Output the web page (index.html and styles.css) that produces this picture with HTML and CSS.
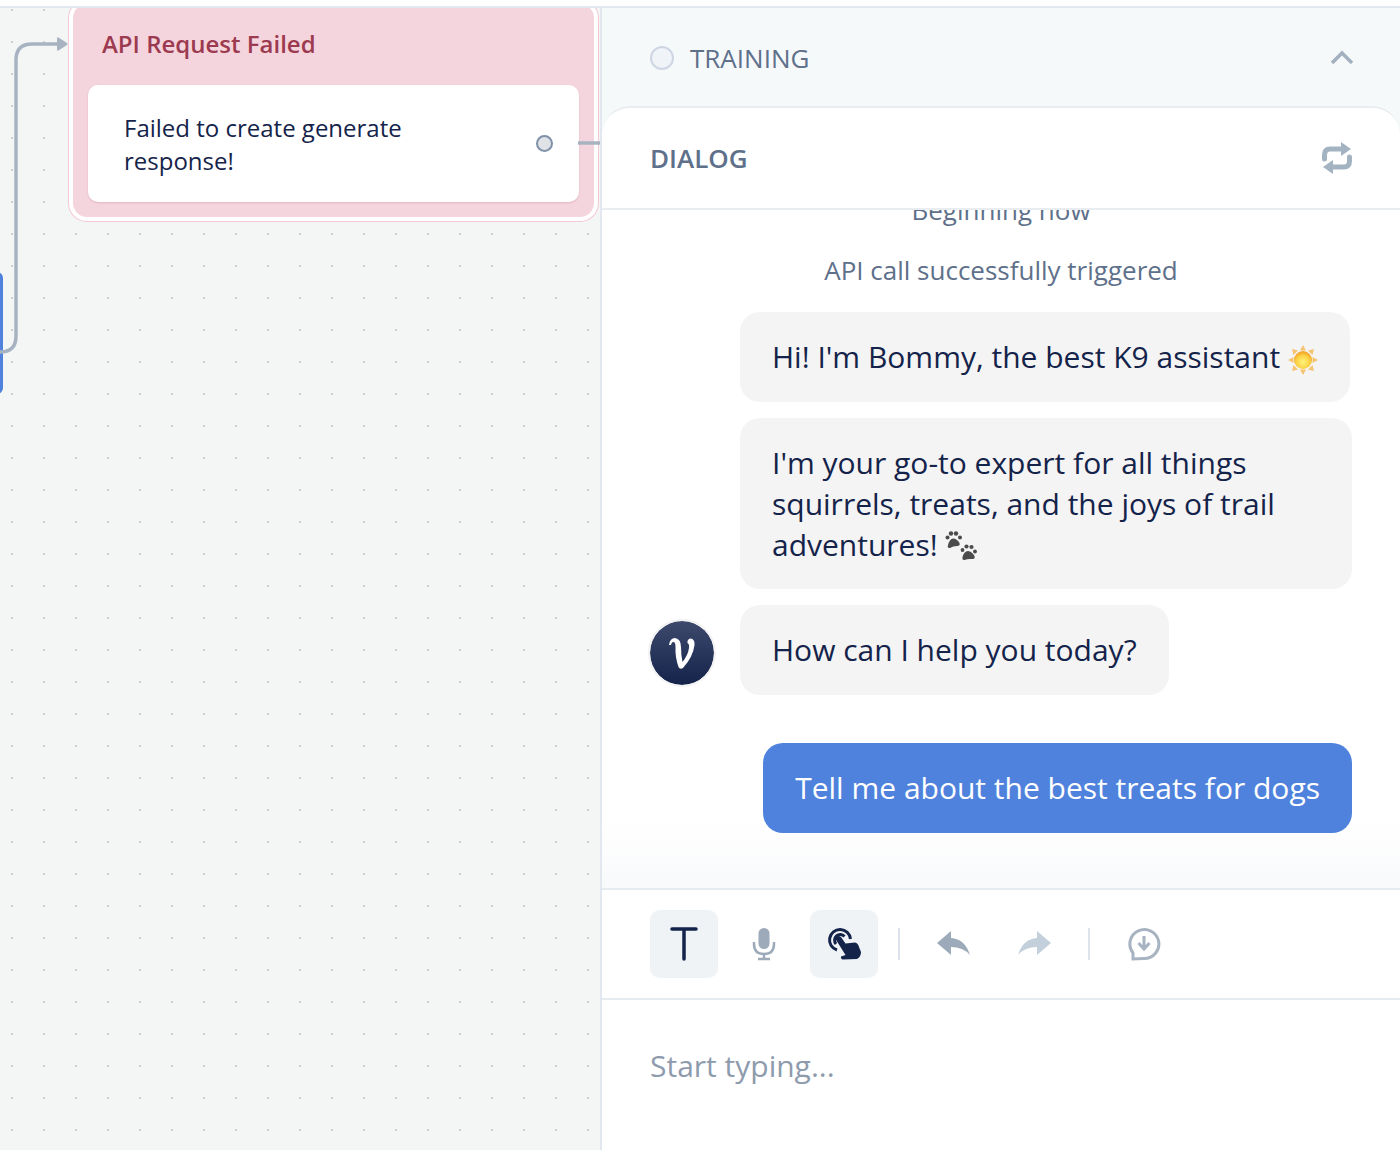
FILE: index.html
```html
<!DOCTYPE html>
<html lang="en">
<head>
    <meta charset="UTF-8">
    <meta name="viewport" content="width=device-width, initial-scale=1.0">
    <title>Dialog</title>
    <link rel="stylesheet" href="styles.css">
</head>
<body>
    <div class="top-strip"></div>
    <div class="main">
        <div class="canvas">
            <div class="blue-node"></div>
            <div class="error-node">
                <div class="error-title">API Request Failed</div>
                <div class="error-card">
                    <div class="error-text">Failed to create generate response!</div>
                    <span class="port"></span>
                </div>
            </div>
            <svg class="wires" width="600" height="400" viewBox="0 0 600 400">
                <path class="wire" d="M0 344 Q16 344 16 328 V52 Q16 36 32 36 H60"/>
                <path class="wire-head" d="M57 30 Q57 29 58.500 29.500 L67 35 Q68 36 67 37 L58.500 42.500 Q57 43 57 42 Z"/>
                <path class="wire" d="M578 135 H600"/>
            </svg>
        </div>

        <div class="panel">
            <div class="training">
                <div class="training-left">
                    <span class="radio"></span>
                    <span>TRAINING</span>
                </div>
                <svg width="24" height="16" viewBox="0 0 24 16"><path class="chevron" d="M2 13 L12 3 L22 13"/></svg>
            </div>

            <div class="dialog">
                <div class="dialog-head">
                    <span>DIALOG</span>
                    <svg width="32" height="34" viewBox="0 0 32 34">
                        <path class="repeat" d="M3.500 18 V14 Q3.500 8 9 8 H21"/>
                        <path class="repeat-fill" d="M20 1 L30 8 L20 15 Z"/>
                        <path class="repeat" d="M28.500 16 V20 Q28.500 26 23 26 H11"/>
                        <path class="repeat-fill" d="M12 19 L2 26 L12 33 Z"/>
                    </svg>
                </div>

                <div class="messages">
                    <div class="system">Beginning now</div>
                    <div class="system">API call successfully triggered</div>
                    <div class="bubble">Hi! I'm Bommy, the best K9 assistant
                        <svg class="emoji" width="30" height="30" viewBox="0 0 30 30">
                            <defs>
                                <radialGradient id="sunFill" cx="50%" cy="62%" r="58%">
                                    <stop offset="0" stop-color="#fff27a"/>
                                    <stop offset="0.6" stop-color="#fcd449"/>
                                    <stop offset="1" stop-color="#f2a62a"/>
                                </radialGradient>
                            </defs>
                            <path fill="#f5c473" d="M15 0 L18 5.500 H12 Z M15 30 L12 24.500 H18 Z M0 15 L5.500 12 V18 Z M30 15 L24.500 18 V12 Z M4 4 L10 5.500 L5.500 10 Z M26 4 L24.500 10 L20 5.500 Z M4 26 L5.500 20 L10 24.500 Z M26 26 L20 24.500 L24.500 20 Z"/>
                            <circle cx="15" cy="15" r="9" fill="url(#sunFill)"/>
                        </svg>
                    </div>
                    <div class="bubble bubble-wide">I'm your go-to expert for all things squirrels, treats, and the joys of trail adventures!
                        <svg class="emoji paws" width="32" height="30" viewBox="0 0 32 30" fill="#4b4b4b">
                            <path d="M8 7.500 Q12 7.500 14.500 12 Q15.500 15 12 15 Q8 15 5 17 Q2 17.500 3 14 Q4.500 8 8 7.500 Z"/>
                            <circle cx="2.500" cy="6.500" r="2"/><circle cx="6" cy="2.500" r="2.200"/><circle cx="11" cy="2.500" r="2.200"/><circle cx="15" cy="6.500" r="2"/>
                            <path d="M23 20 Q27 20.500 29.500 25 Q30.500 28.500 27 28 Q23 27.500 19.500 29 Q17 29.500 17.500 26 Q19 20.500 23 20 Z"/>
                            <circle cx="17.500" cy="19" r="1.900"/><circle cx="21.500" cy="15.500" r="2.100"/><circle cx="26.500" cy="16" r="2.100"/><circle cx="30" cy="20.500" r="1.900"/>
                        </svg>
                    </div>
                    <div class="bot-row">
                        <div class="avatar">
                            <svg width="28" height="34" viewBox="0 0 28 34"><path fill="white" d="M1 9 Q2 2 7 2 Q13 3 13 11 Q13 19 14.500 26 Q20 19 21 12 Q21.500 8 19.500 7 Q19 3 22.500 2.500 Q27 3 26.500 9 Q25 21 15 32 Q12 34 10.500 31 Q7 21 7.500 11 Q7.500 6 5.500 6 Q3.500 6 3 9 Z"/></svg>
                        </div>
                        <div class="bubble">How can I help you today?</div>
                    </div>
                    <div class="bubble bubble-user">Tell me about the best treats for dogs</div>
                </div>

                <div class="toolbar">
                    <div class="tool tool-on">
                        <svg width="30" height="36" viewBox="0 0 30 36"><path class="t-stroke" d="M3 3 H27 M15 3 V33"/></svg>
                    </div>
                    <div class="tool">
                        <svg width="24" height="34" viewBox="0 0 24 34">
                            <rect x="6.500" y="1" width="11" height="21" rx="5.500" fill="#9daab9"/>
                            <path class="mic-arc" d="M2 15 V17 Q2 27 12 27 Q22 27 22 17 V15 M12 27 V32 M6 32 H18"/>
                        </svg>
                    </div>
                    <div class="tool tool-on">
                        <svg width="36" height="36" viewBox="0 0 36 36">
                            <path class="touch-arc" d="M11 24 A10.500 10.500 0 1 1 24.500 13"/>
                            <path class="touch-arc" d="M10 18 A5.660 5.660 0 1 1 18.500 10.500"/>
                            <path fill="#14234a" d="M9.500 13 Q10 10 13 10 Q15 10 16 12.500 L19.500 17.500 L29 16.500 Q32 17 33 21 L35 26 Q35 31 31 33 L17 33.500 Q14.500 33 15 30.500 L19.500 29 Z"/>
                        </svg>
                    </div>
                    <span class="sep"></span>
                    <div class="tool">
                        <svg width="34" height="28" viewBox="0 0 34 28"><path fill="#9daab9" d="M0 13 L14 1 V8 Q28 9 33 25 Q26 17 14 17 V25 Z"/></svg>
                    </div>
                    <div class="tool">
                        <svg width="34" height="28" viewBox="0 0 34 28"><path fill="#c3d0dc" d="M34 13 L20 1 V8 Q6 9 1 25 Q8 17 20 17 V25 Z"/></svg>
                    </div>
                    <span class="sep"></span>
                    <div class="tool">
                        <svg width="34" height="34" viewBox="0 0 34 34">
                            <path class="dl-ring" d="M6 32 L6 26 A14.500 14.500 0 1 1 17 31.500 Z"/>
                            <path class="dl-arrow" d="M17 9 V21 M11.500 16 L17 22 L22.500 16"/>
                        </svg>
                    </div>
                </div>

                <div class="input-row">Start typing...</div>
            </div>
        </div>
    </div>
</body>
</html>
```

FILE: styles.css
```css
* {
    box-sizing: border-box;
}
body {
    font-family: "Open Sans", sans-serif;
    background-color: white;
    height: 1150px;
    margin: 0;
    overflow: hidden;
}
.top-strip {
    height: 8px;
    border-bottom: 2px solid #e3e7f0;
}
.main {
    display: flex;
    height: 1142px;
}

/* canvas */
.canvas {
    position: relative;
    width: 602px;
    flex-shrink: 0;
    overflow: hidden;
    background-color: #f4f6f6;
    background-image: radial-gradient(circle, #cdd3d5 1.3px, transparent 1.5px);
    background-size: 32px 32px;
    background-position: -4px -14px;
    border-right: 2px solid #e3e7f0;
}
.blue-node {
    position: absolute;
    left: -20px;
    top: 264px;
    width: 23px;
    height: 122px;
    background-color: #4f82dc;
    border-radius: 6px;
}
.wires {
    position: absolute;
    left: 0;
    top: 0;
}
.wire {
    fill: none;
    stroke: #a8b3c2;
    stroke-width: 3.5;
}
.wire-head {
    fill: #a8b3c2;
}
.error-node {
    position: absolute;
    left: 73px;
    top: -4px;
    width: 521px;
    padding: 23px 15px 15px 15px;
    background-color: #f5d5dd;
    border-radius: 14px;
    box-shadow: 0 0 0 4px white, 0 0 0 5px #f3c8d2;
}
.error-title {
    font-size: 24px;
    font-weight: 600;
    line-height: 34px;
    color: #9c3a50;
    padding-left: 14px;
    margin-bottom: 24px;
}
.error-card {
    display: flex;
    align-items: center;
    justify-content: space-between;
    height: 117px;
    padding: 0 26px 0 36px;
    background-color: white;
    border-radius: 10px;
    box-shadow: 0 1px 2px rgba(190, 110, 130, 0.3);
}
.error-text {
    width: 300px;
    font-size: 24px;
    line-height: 33px;
    color: #14234a;
}
.port {
    width: 17px;
    height: 17px;
    background-color: #dfe3e8;
    border: 2px solid #7f91a8;
    border-radius: 50%;
}

/* right panel */
.panel {
    flex: 1;
    min-width: 0;
    display: flex;
    flex-direction: column;
    background-color: #f6f9fa;
}
.training {
    height: 98px;
    flex-shrink: 0;
    display: flex;
    align-items: center;
    justify-content: space-between;
    padding: 2px 46px 0 48px;
    font-size: 26px;
    color: #5e708a;
}
.training-left {
    display: flex;
    align-items: center;
    gap: 16px;
}
.radio {
    width: 24px;
    height: 24px;
    background-color: #f0f3f8;
    border: 2px solid #ced6e4;
    border-radius: 50%;
}
.chevron {
    fill: none;
    stroke: #a3b0bf;
    stroke-width: 3.5;
}
.dialog {
    flex: 1;
    min-height: 0;
    display: flex;
    flex-direction: column;
    background-color: white;
    border-top: 2px solid #e9edf0;
    border-radius: 28px 28px 0 0;
}
.dialog-head {
    height: 102px;
    flex-shrink: 0;
    display: flex;
    align-items: center;
    justify-content: space-between;
    padding: 0 47px 0 48px;
    font-size: 26px;
    font-weight: 600;
    color: #5e708a;
    border-bottom: 2px solid #e9edf0;
    border-radius: 28px 28px 0 0;
}
.repeat {
    fill: none;
    stroke: #a3b3c2;
    stroke-width: 5;
    stroke-linecap: round;
}
.repeat-fill {
    fill: #a3b3c2;
}
.messages {
    flex: 1;
    min-height: 0;
    overflow: hidden;
    display: flex;
    flex-direction: column;
    justify-content: flex-end;
    align-items: flex-start;
    gap: 16px;
    padding: 0 48px 55px 138px;
    background: linear-gradient(to bottom, white 90%, #f8f9fb 100%);
    font-size: 30px;
    line-height: 41px;
    color: #14234a;
}
.system {
    flex-shrink: 0;
    align-self: stretch;
    margin: 0 -48px 8px -138px;
    text-align: center;
    font-size: 26px;
    line-height: 36px;
    color: #5e708a;
}
.bubble {
    flex-shrink: 0;
    padding: 24px 32px 25px;
    background-color: #f4f4f4;
    border-radius: 20px;
}
.bubble-wide {
    width: 612px;
    padding-bottom: 24px;
}
.emoji {
    vertical-align: middle;
}
.paws {
    margin: -6px 0 -2px;
}
.bot-row {
    flex-shrink: 0;
    display: flex;
    align-items: center;
    gap: 24px;
    margin-left: -92px;
}
.avatar {
    width: 68px;
    height: 68px;
    margin-top: 6px;
    display: flex;
    align-items: center;
    justify-content: center;
    background: linear-gradient(to bottom, #3d4a6d, #15224a) padding-box;
    border: 2px solid #f3f3f3;
    border-radius: 50%;
}
.bubble-user {
    margin-top: 32px;
    align-self: flex-end;
    background-color: #4f82dc;
    color: white;
}

/* toolbar */
.toolbar {
    height: 112px;
    flex-shrink: 0;
    display: flex;
    align-items: center;
    gap: 12px;
    padding: 0 48px;
    background-color: white;
    border-top: 2px solid #e6ebef;
    border-bottom: 2px solid #e6ebef;
}
.tool {
    width: 68px;
    height: 68px;
    display: flex;
    align-items: center;
    justify-content: center;
    border-radius: 10px;
}
.tool-on {
    background-color: #eff3f6;
}
.sep {
    width: 2px;
    height: 32px;
    margin: 0 8px;
    background-color: #dde3ea;
}
.t-stroke {
    fill: none;
    stroke: #14234a;
    stroke-width: 3.5;
    stroke-linecap: round;
}
.mic-arc {
    fill: none;
    stroke: #9daab9;
    stroke-width: 2.5;
}
.touch-arc {
    fill: none;
    stroke: #14234a;
    stroke-width: 3;
}
.dl-ring {
    fill: none;
    stroke: #a8b3c2;
    stroke-width: 3;
}
.dl-arrow {
    fill: none;
    stroke: #a8b3c2;
    stroke-width: 3;
}
.input-row {
    height: 150px;
    flex-shrink: 0;
    padding: 45px 48px 0;
    font-size: 30px;
    line-height: 42px;
    color: #8d9bad;
    background-color: white;
}
```
